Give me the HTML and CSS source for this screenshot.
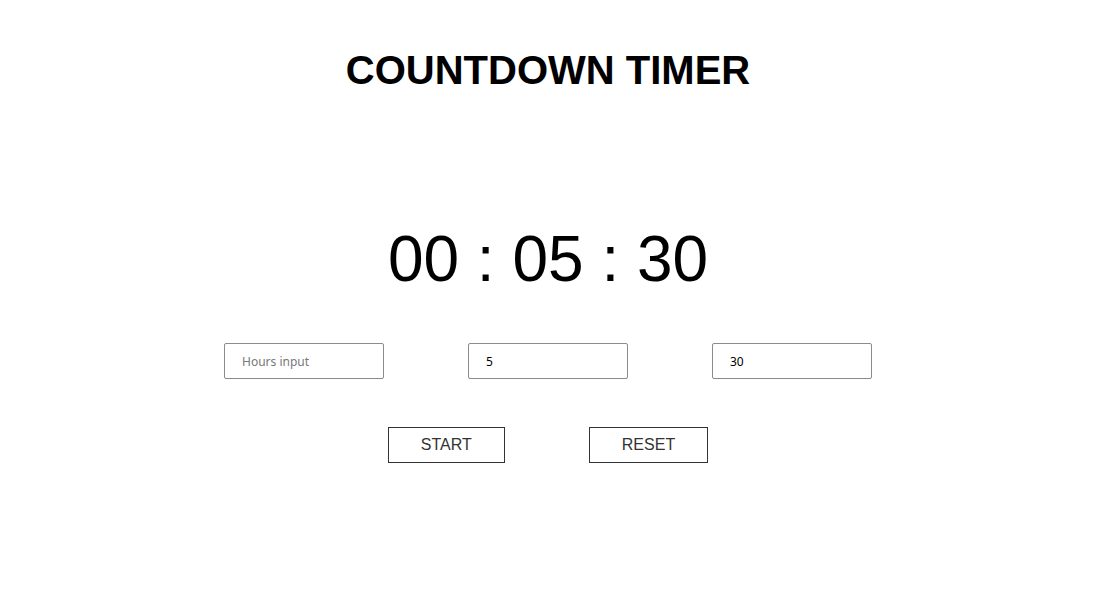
FILE: index.html
```html
<!DOCTYPE html>
<html>
<head>
<meta charset="utf-8">
<link rel="stylesheet" href="styles.css">
</head>
<body>
<main class="app">
  <h1 class="title">COUNTDOWN TIMER</h1>
  <div class="display">00 : 05 : 30</div>
  <div class="inputs">
    <input class="field" type="text" placeholder="Hours input">
    <input class="field" type="text" value="5">
    <input class="field" type="text" value="30">
  </div>
  <div class="buttons">
    <button class="btn">START</button>
    <button class="btn">RESET</button>
  </div>
</main>
</body>
</html>
```
FILE: styles.css
```css
html, body {
  margin: 0;
  padding: 0;
  background: #fff;
}
.app {
  display: flex;
  flex-direction: column;
  align-items: center;
  padding-left: 2px;
  font-family: "Liberation Sans", Arial, sans-serif;
  color: #000;
}
.title {
  margin: 47px 0 0;
  font-size: 40px;
  font-weight: bold;
  line-height: 46px;
}
.display {
  margin-top: 129px;
  font-size: 64px;
  line-height: 74px;
}
.inputs {
  display: flex;
  gap: 84px;
  margin-top: 47px;
}
.field {
  box-sizing: border-box;
  width: 160px;
  height: 36px;
  border: 1px solid #8a8a8f;
  border-radius: 2px;
  padding: 0 17px;
  font-family: "Noto Sans", "Open Sans", sans-serif;
  font-size: 12px;
  color: #000;
  outline: none;
}
.field::placeholder {
  color: #777;
}
.buttons {
  display: flex;
  gap: 84px;
  margin-top: 48px;
}
.btn {
  box-sizing: border-box;
  height: 36px;
  padding: 0 32px;
  background: #fff;
  border: 1px solid #333;
  border-radius: 0;
  font-family: "Liberation Sans", Arial, sans-serif;
  font-size: 16px;
  color: #333;
}
```
